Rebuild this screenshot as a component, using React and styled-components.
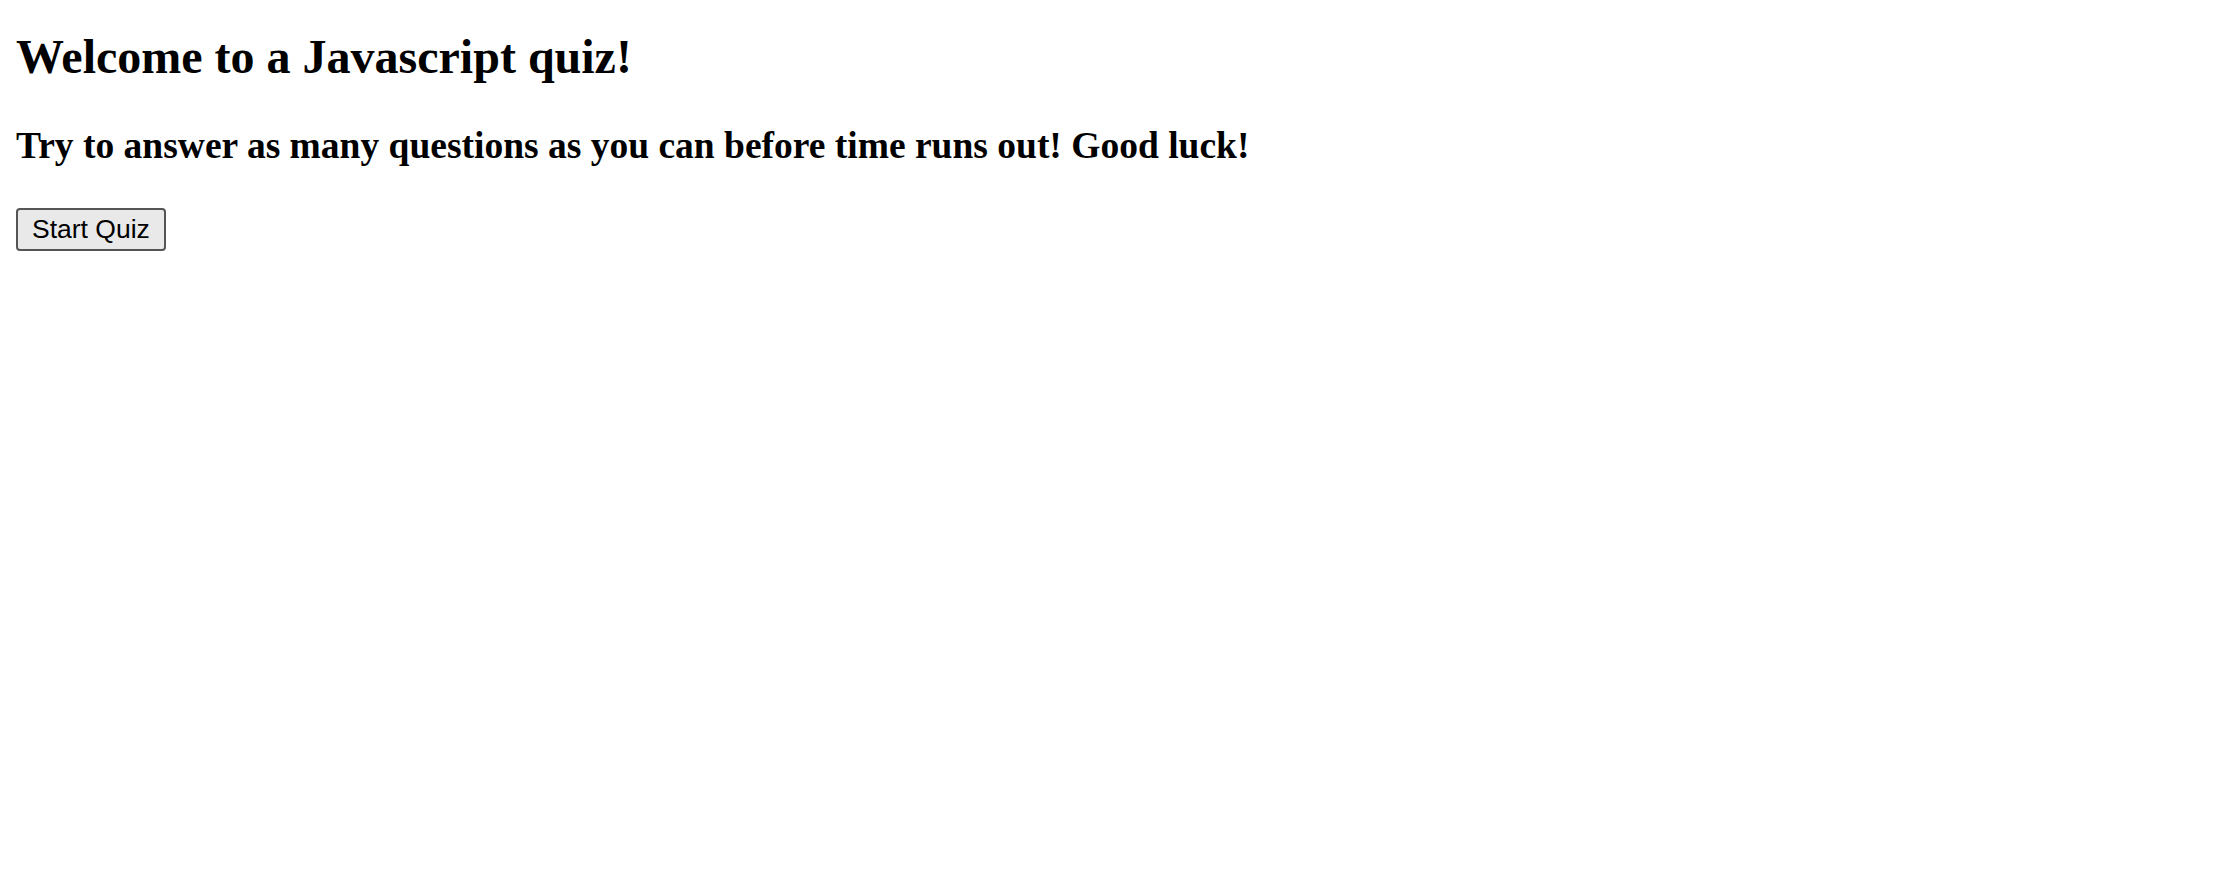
import React from "react";
import styled, { createGlobalStyle } from "styled-components";

const GlobalStyle = createGlobalStyle`
  body {
    margin: 0;
    font-family: "Liberation Serif", "Times New Roman", serif;
    background: #fff;
    color: #000;
  }
`

const Page = styled.div`
  padding: 28.5px 16px;
`

const Title = styled.h1`
  font-size: 48px;
  font-weight: bold;
  margin: 0 0 40.5px;
`

const Subtitle = styled.h2`
  font-size: 37.5px;
  font-weight: bold;
  margin: 0 0 40.5px;
`

const StartButton = styled.button`
  font-family: "Liberation Sans", Arial, sans-serif;
  font-size: 26.5px;
  padding: 4px 14px;
  border: 2px solid #555;
  border-radius: 4px;
  background: #e9e9e9;
  color: #000;
  cursor: pointer;
`

export default function App() {
  return (
    <Page>
      <GlobalStyle />
      <Title>Welcome to a Javascript quiz!</Title>
      <Subtitle>Try to answer as many questions as you can before time runs out! Good luck!</Subtitle>
      <StartButton>Start Quiz</StartButton>
    </Page>
  )
}
